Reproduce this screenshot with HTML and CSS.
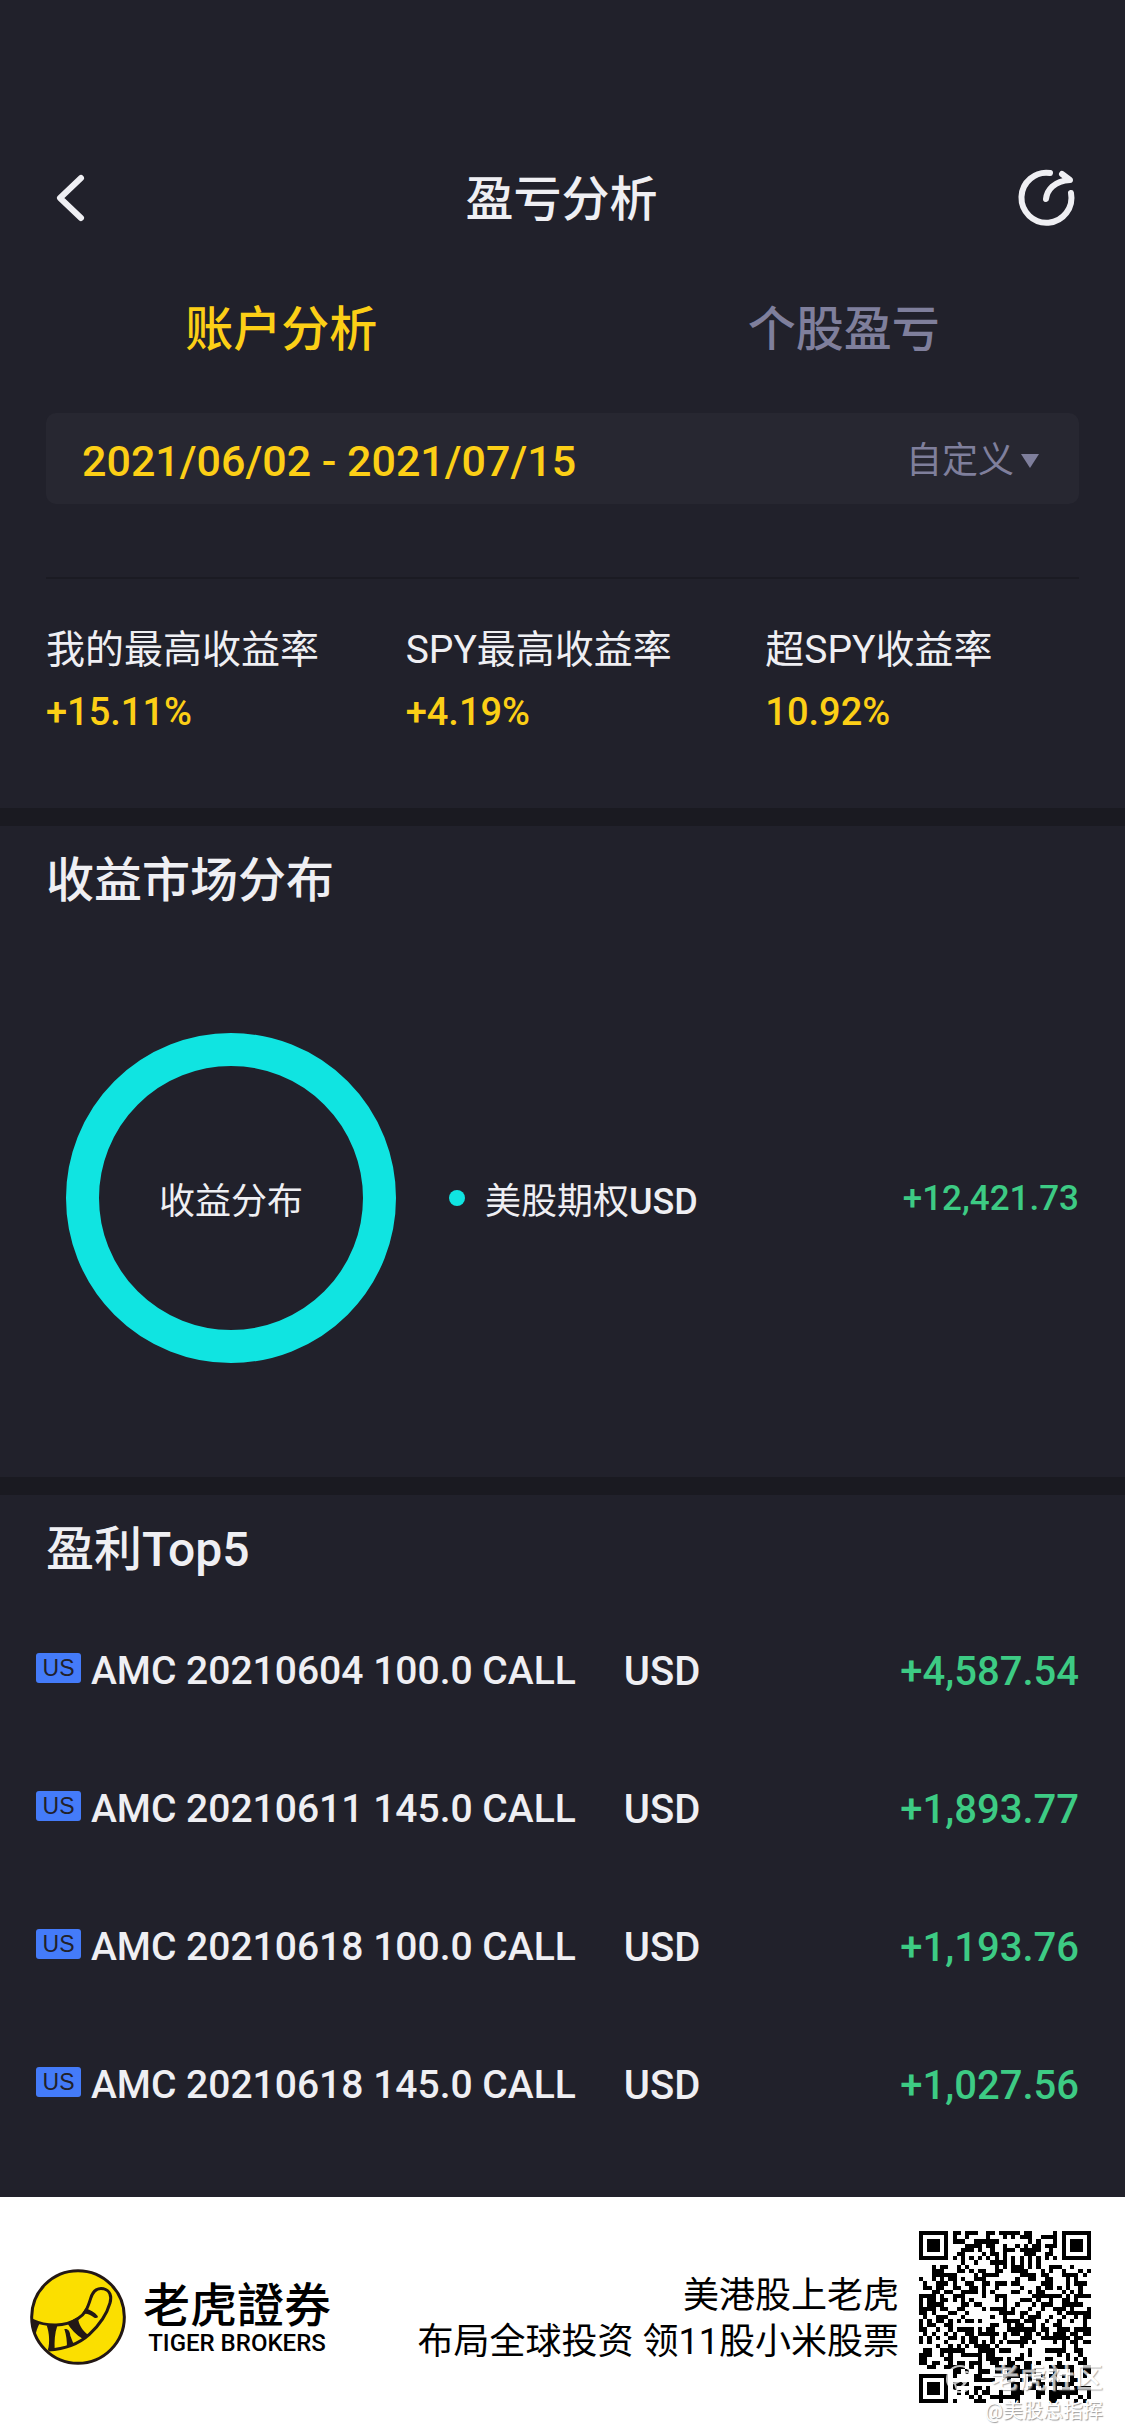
FILE: index.html
```html
<!DOCTYPE html>
<html lang="zh-CN">
<head>
    <meta charset="UTF-8">
    <meta name="viewport" content="width=device-width, initial-scale=1.0">
    <title>盈亏分析</title>
    <link rel="stylesheet" href="styles.css">
</head>
<body>
    <header class="navbar">
        <button class="icon-btn" aria-label="返回">
            <svg width="32" height="50" viewBox="0 0 32 50"><path d="M27 5 L6 25 L27 45" fill="none" stroke="#efeff3" stroke-width="6" stroke-linecap="round" stroke-linejoin="round"/></svg>
        </button>
        <h1>盈亏分析</h1>
        <button class="icon-btn" aria-label="分享">
            <svg width="60" height="60" viewBox="0 0 60 60" fill="none" stroke="#efeff3" stroke-width="6" stroke-linecap="round" stroke-linejoin="round">
                <path d="M33 5 A25 25 0 1 0 54 25"/>
                <path d="M29 31 C30 22 37 13 53 12 L45 6"/>
            </svg>
        </button>
    </header>

    <nav class="tabs">
        <button class="tab active">账户分析</button>
        <button class="tab">个股盈亏</button>
    </nav>

    <section class="summary">
        <div class="date-box">
            <span class="date-range">2021/06/02 - 2021/07/15</span>
            <div class="range-picker">
                <select aria-label="时间范围">
                    <option>自定义</option>
                </select>
                <svg width="18" height="14" viewBox="0 0 18 14"><path d="M0 0 H18 L9 14 Z" fill="#7f7f9c"/></svg>
            </div>
        </div>
        <div class="stats">
            <div>
                <p class="stat-label">我的最高收益率</p>
                <p class="stat-value">+15.11%</p>
            </div>
            <div>
                <p class="stat-label">SPY最高收益率</p>
                <p class="stat-value">+4.19%</p>
            </div>
            <div>
                <p class="stat-label">超SPY收益率</p>
                <p class="stat-value">10.92%</p>
            </div>
        </div>
    </section>

    <section class="market">
        <h2>收益市场分布</h2>
        <div class="chart-row">
            <div class="donut">收益分布</div>
            <span class="dot"></span>
            <span class="legend-name">美股期权<b>USD</b></span>
            <span class="legend-value">+12,421.73</span>
        </div>
    </section>

    <section class="top5">
        <h2>盈利Top5</h2>
        <table>
            <tr>
                <td class="name"><span class="badge">US</span>AMC 20210604 100.0 CALL</td>
                <td>USD</td>
                <td class="profit">+4,587.54</td>
            </tr>
            <tr>
                <td class="name"><span class="badge">US</span>AMC 20210611 145.0 CALL</td>
                <td>USD</td>
                <td class="profit">+1,893.77</td>
            </tr>
            <tr>
                <td class="name"><span class="badge">US</span>AMC 20210618 100.0 CALL</td>
                <td>USD</td>
                <td class="profit">+1,193.76</td>
            </tr>
            <tr>
                <td class="name"><span class="badge">US</span>AMC 20210618 145.0 CALL</td>
                <td>USD</td>
                <td class="profit">+1,027.56</td>
            </tr>
        </table>
    </section>

    <footer>
        <svg class="logo" width="96" height="96" viewBox="0 0 288 288">
            <circle cx="144" cy="144" r="139" fill="#fbdf00" stroke="#231815" stroke-width="9"/>
            <!-- tail -->
            <path d="M6 153 C55 175 105 172 142 150 C165 136 172 120 182 88 C190 62 206 56 220 59 C240 64 246 82 240 102 C232 130 215 162 178 196 C145 226 105 240 55 243" fill="none" stroke="#231815" stroke-width="9"/>
            <path d="M4 153 L29 163 C22 175 18 190 16 202 C8 185 4 170 4 153 Z M50 169 L82 170 C74 192 73 218 74 241 L54 243 C60 220 58 192 50 169 Z M103 180 C114 178 120 186 121 200 L131 226 L111 236 C111 215 109 198 103 180 Z M112 163 L143 144 C146 165 156 185 175 198 L160 211 C138 198 122 180 112 163 Z M154 138 L166 118 C180 122 194 130 203 141 C206 147 198 148 193 146 Q176 133 165 134 Z" fill="#231815"/>
        </svg>
        <div class="brand">
            <strong>老虎證券</strong>
            <span>TIGER BROKERS</span>
        </div>
        <p class="slogan">美港股上老虎<br>布局全球投资 领11股小米股票</p>
        <div class="qr-box">
            <svg id="qr" viewBox="0 0 41 41" shape-rendering="crispEdges" role="img" aria-label="二维码"></svg>
            <div class="watermark">
                <div class="wm-brand">
                    <svg width="30" height="30" viewBox="0 0 30 30" fill="none" stroke="#fff" stroke-width="2"><circle cx="15" cy="15" r="13"/><path d="M3 18 C12 22 18 16 21 8 C27 7 25 18 12 26 M10 20 L12 26 M16 16 L20 20"/></svg>
                    <span>老虎社区</span>
                </div>
                <span class="wm-user">@美股总指挥</span>
            </div>
        </div>
    </footer>

    <script src="script.js"></script>
</body>
</html>
```

FILE: styles.css
```css
* {
    box-sizing: border-box;
}
body {
    margin: 0;
    padding-top: 132px;
    min-height: 100vh;
    display: flex;
    flex-direction: column;
    background-color: #21212b;
    color: #efeff3;
    font-family: Roboto, "Noto Sans CJK SC", sans-serif;
}
h1, h2, p {
    margin: 0;
    font-weight: 500;
}
button, select {
    padding: 0;
    border: none;
    background: none;
    color: inherit;
    font: inherit;
}
.navbar {
    display: flex;
    justify-content: space-between;
    align-items: center;
    height: 132px;
    padding: 0 48px 0 46px;
}
.icon-btn {
    display: flex;
    width: 64px;
    padding-left: 8px;
}
.icon-btn:last-child {
    justify-content: flex-end;
    padding: 0;
}
h1, h2, .tab {
    font-size: 48px;
    line-height: 60px;
}
h1 {
    padding-top: 4px;
}
.tabs {
    display: flex;
    height: 128px;
}
.tab {
    flex: 1;
    padding-top: 4px;
    color: #7f7f9c;
    font-weight: 500;
}
.tab.active {
    color: #fccf16;
}
.summary {
    padding: 21px 46px 65px;
}
.date-box {
    display: flex;
    justify-content: space-between;
    align-items: center;
    height: 91px;
    padding: 4px 40px 0 36px;
    border-radius: 10px;
    background-color: #272731;
}
.date-range {
    color: #fccf16;
    font-size: 43px;
    font-weight: 500;
}
.range-picker {
    display: flex;
    align-items: center;
    gap: 6px;
    color: #7f7f9c;
    font-size: 36px;
}
.range-picker select {
    appearance: none;
}
.stats {
    display: grid;
    grid-template-columns: 360fr 360fr 314fr;
    margin-top: 73px;
    padding-top: 40px;
    border-top: 2px solid #1b1b23;
    line-height: 62px;
}
.stat-label {
    font-size: 39px;
    font-weight: 400;
}
.stat-value {
    color: #fccf16;
    font-size: 38px;
}
.market, .top5 {
    border-top: 18px solid #1a1a21;
    padding: 25px 46px 0;
}
.chart-row {
    display: flex;
    align-items: center;
    padding: 122px 0 114px 20px;
    font-size: 36px;
}
.donut {
    display: flex;
    justify-content: center;
    align-items: center;
    width: 330px;
    height: 330px;
    border: 33px solid #10e4e1;
    border-radius: 50%;
}
.dot {
    width: 16px;
    height: 16px;
    margin: 0 20px 0 53px;
    border-radius: 50%;
    background-color: #10e4e1;
}
.legend-name b {
    font-weight: 500;
}
.legend-value {
    margin-left: auto;
    font-size: 35px;
    font-weight: 500;
}
.legend-value, .profit {
    color: #3dcb84;
}
.top5 {
    flex: 1;
    padding: 25px 46px 43px 36px;
}
.top5 h2 {
    padding-left: 10px;
}
table {
    width: 100%;
    margin-top: 22px;
    border-collapse: collapse;
    font-size: 40px;
    font-weight: 500;
    white-space: nowrap;
}
td {
    height: 138px;
    padding: 0;
}
.name {
    padding-right: 48px;
    font-size: 39px;
}
.profit {
    width: 100%;
    text-align: right;
}
.badge {
    display: inline-block;
    width: 45px;
    margin-right: 10px;
    border-radius: 3px;
    background-color: #447bf9;
    color: #21212b;
    font: 23px/30px "Liberation Sans", Arial, sans-serif;
    text-align: center;
    vertical-align: 8px;
}
footer {
    display: flex;
    align-items: center;
    height: 240px;
    padding: 0 34px 0 30px;
    background-color: #fff;
    color: #000;
}
.brand {
    display: flex;
    flex-direction: column;
    align-items: center;
    margin-left: 17px;
}
.brand strong {
    font: 500 47px/52px "Noto Sans CJK TC", sans-serif;
}
.brand span {
    font-size: 24px;
    font-weight: 500;
    line-height: 30px;
}
.slogan {
    margin-left: auto;
    padding-top: 4px;
    font-size: 36px;
    font-weight: 400;
    line-height: 46px;
    text-align: right;
}
.qr-box {
    position: relative;
    width: 172px;
    height: 172px;
    margin-left: 20px;
}
#qr {
    display: block;
    width: 100%;
}
.watermark {
    position: absolute;
    right: -12px;
    bottom: -20px;
    display: flex;
    flex-direction: column;
    align-items: flex-end;
    color: #fff;
    text-shadow: 1px 1px 1px #999;
    white-space: nowrap;
}
.wm-brand {
    display: flex;
    align-items: center;
    gap: 16px;
    font-size: 28px;
    font-weight: 500;
    line-height: 40px;
    opacity: 0.75;
}
.wm-user {
    font-size: 20px;
    line-height: 24px;
}
```

FILE: script.js
```js
const SIZE = 41;
const svg = document.getElementById('qr');
let seed = 20210715;

function nextBit() {
    seed = (seed * 1103515245 + 12345) % 2147483648;
    return (seed >> 16) & 1;
}

// square rings: 7x7 finders in the corners, 5x5 alignment mark bottom right
function ring(x, y, cx, cy, reach) {
    const d = Math.max(Math.abs(x - cx), Math.abs(y - cy));
    if (d > reach) return null;
    return reach === 4 ? (d === 3 || d < 2) : d !== 1;
}

function isDark(x, y) {
    const bit = nextBit() === 1;
    const marks = [
        ring(x, y, 3, 3, 4),
        ring(x, y, SIZE - 4, 3, 4),
        ring(x, y, 3, SIZE - 4, 4),
        ring(x, y, 34, 34, 2)
    ];
    const mark = marks.find(m => m !== null);
    if (mark !== undefined) return mark;
    if (x === 6 || y === 6) return (x + y) % 2 === 0;
    return bit;
}

let d = '';
for (let y = 0; y < SIZE; y++) {
    for (let x = 0; x < SIZE; x++) {
        if (isDark(x, y)) d += `M${x} ${y}h1v1h-1z`;
    }
}
const path = document.createElementNS('http://www.w3.org/2000/svg', 'path');
path.setAttribute('d', d);
svg.appendChild(path);
```
